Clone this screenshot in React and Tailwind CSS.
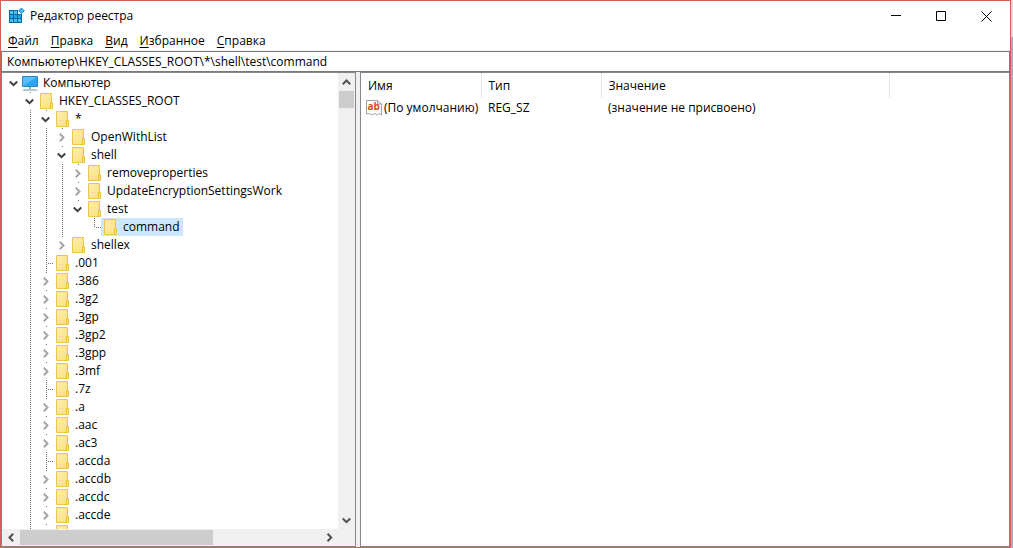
const base = "font-['Open_Sans',sans-serif] text-[12px] leading-[18px]";

function RegIcon() {
  return (
    <svg width="16" height="16" viewBox="0 0 16 16" aria-hidden="true">
      <path d="M0 2h9v4h4v9H0z" fill="#0c6a9e" />
      <path d="M1 3h3v3H1zM5 3h3v3H5z" fill="#45c3f7" />
      <path d="M1 7h3v3H1zM5 7h3v3H5zM9 7h3v3H9z" fill="#23a4e4" />
      <path d="M1 11h3v3H1zM5 11h3v3H5zM9 11h3v3H9z" fill="#3fbdf5" />
      <path d="M12.500 .7L15.300 3.500 12.500 6.300 9.700 3.500z" fill="#45c3f7" stroke="#1580b8" transform="translate(0 -.7)" />
    </svg>
  );
}

function Folder() {
  return (
    <svg width="17" height="18" viewBox="0 0 17 18" className="shrink-0" aria-hidden="true">
      <defs>
        <linearGradient id="folder" x1="0" y1="0" x2="1" y2="1">
          <stop offset="0" stopColor="#ffeeaf" />
          <stop offset="1" stopColor="#fddf7c" />
        </linearGradient>
      </defs>
      <path d="M3.500 1.500h11v15h-11z" fill="url(#folder)" stroke="#ecc64a" />
      <path d="M13.500 10.500h2v6h-2z" fill="#ffe48c" stroke="#e8bf3c" />
    </svg>
  );
}

function Computer() {
  return (
    <svg width="17" height="18" viewBox="0 0 17 18" className="shrink-0" aria-hidden="true">
      <path d="M1.500 2.500h15v10h-15z" fill="#52c0fb" stroke="#2f86ba" />
      <path d="M2 12L16 3v9z" fill="#2aa5f2" />
      <path d="M8 13h2v2H8z" fill="#8fa9b9" />
      <path d="M3 15h12l2 2H1z" fill="#b3c7d4" />
    </svg>
  );
}

function Guide({ kind, root }) {
  const drawing = (
    <svg width="16" height="18" viewBox="0 0 16 18" className="shrink-0" aria-hidden="true">
      {"|TL".includes(kind) && (
        <path d={kind === "L" ? "M9.500 0v10" : "M9.500 0v18"} stroke="#707070" strokeDasharray="1 1" />
      )}
      {"TL".includes(kind) && <path d="M11 9.500h5" stroke="#707070" strokeDasharray="1 1" />}
      {"v>".includes(kind) && !root && <path d="M9.500 0v1" stroke="#707070" />}
      {kind === "v" && <path d="M4.800 7.500L8.500 11.200 12.200 7.500" fill="none" stroke="#404040" strokeWidth="2" />}
      {kind === ">" && <path d="M6.800 5.800L10.500 9.500 6.800 13.200" fill="none" stroke="#a6a6a6" strokeWidth="2" />}
    </svg>
  );
  if (kind === "v" || kind === ">")
    return (
      <button type="button" aria-label={kind === "v" ? "Свернуть" : "Развернуть"} className="shrink-0">
        {drawing}
      </button>
    );
  return drawing;
}

// One character per indent column: "v" open, ">" closed, "|" line, "T" and "L" branch to a leaf.
const rows = [
  ["v", "Компьютер"],
  [" v", "HKEY_CLASSES_ROOT"],
  [" |v", "*"],
  [" ||>", "OpenWithList"],
  [" ||v", "shell"],
  [" |||>", "removeproperties"],
  [" |||>", "UpdateEncryptionSettingsWork"],
  [" |||v", "test"],
  [" ||| L", "command"],
  [" ||>", "shellex"],
  [" |T", ".001"],
  [" |>", ".386"],
  [" |>", ".3g2"],
  [" |>", ".3gp"],
  [" |>", ".3gp2"],
  [" |>", ".3gpp"],
  [" |>", ".3mf"],
  [" |T", ".7z"],
  [" |>", ".a"],
  [" |>", ".aac"],
  [" |>", ".ac3"],
  [" |T", ".accda"],
  [" |>", ".accdb"],
  [" |>", ".accdc"],
  [" |>", ".accde"],
  [" |>", ""],
];

function TreeRow({ guides, label }) {
  const selected = label === "command";
  const root = guides.length === 1;
  return (
    <li className="flex h-[18px] items-center">
      {[...guides].map((g, i) => (
        <Guide key={i} kind={g} root={root} />
      ))}
      <span className={selected ? "flex h-[18px] items-center bg-[#cce8ff] pr-[3px]" : "flex h-[18px] items-center"}>
        {root ? <Computer /> : <Folder />}
        <span className="pl-[5px] whitespace-nowrap">{label}</span>
      </span>
    </li>
  );
}

function Arrow({ d }) {
  return (
    <svg width="9" height="9" viewBox="0 0 9 9" aria-hidden="true">
      <path d={d} fill="none" stroke="#505050" strokeWidth="2" />
    </svg>
  );
}

const menu = ["Файл", "Правка", "Вид", "Избранное", "Справка"];

export default function App() {
  return (
    <div className={`flex h-screen bg-linear-to-b from-[#dcdcd8] from-[37px] to-[#a9adb9] to-[37px] pr-[2px] text-black ${base}`}>
      <main className="flex min-w-0 flex-1 flex-col border border-[#d0604f] bg-white">
        <header className="flex h-[30px] shrink-0 items-center pl-2">
          <RegIcon />
          <h1 className="flex-1 pl-[5px]">Редактор реестра</h1>
          <button type="button" aria-label="Свернуть окно" className="flex h-[30px] w-[45px] items-center justify-center">
            <svg width="10" height="10" viewBox="0 0 10 10"><path d="M0 4.500h10" stroke="#000" /></svg>
          </button>
          <button type="button" aria-label="Развернуть окно" className="flex h-[30px] w-[45px] items-center justify-center">
            <svg width="10" height="10" viewBox="0 0 10 10"><path d="M.5.5h9v9h-9z" fill="none" stroke="#000" /></svg>
          </button>
          <button type="button" aria-label="Закрыть" className="flex h-[30px] w-[47px] items-center justify-center">
            <svg width="11" height="11" viewBox="0 0 11 11"><path d="M.5.5l10 10M10.500.5l-10 10" stroke="#000" /></svg>
          </button>
        </header>
        <nav className="flex h-[20px] shrink-0 items-end gap-3 border-b border-[#f0f0f0] pl-[7px]">
          {menu.map((m) => (
            <button key={m} type="button">
              <span className="underline underline-offset-2">{m[0]}</span>
              {m.slice(1)}
            </button>
          ))}
        </nav>
        <input
          aria-label="Адрес"
          defaultValue="Компьютер\HKEY_CLASSES_ROOT\*\shell\test\command"
          className="h-[21px] shrink-0 border border-[#7a7a7a] px-[5px] outline-none"
        />
        <div className="flex min-h-0 flex-1 bg-[#f0f0f0]">
          <section className="flex w-[355px] shrink-0 flex-col border border-[#828790] bg-white">
            <div className="flex min-h-0 flex-1">
              <ul className="min-w-0 flex-1 overflow-hidden pt-px pl-[3px]">
                {rows.map(([g, l]) => (
                  <TreeRow key={l} guides={g} label={l} />
                ))}
              </ul>
              <div className="flex w-[17px] shrink-0 flex-col items-center bg-[#f0f0f0] pt-px">
                <button type="button" aria-label="Вверх" className="flex h-[17px] items-center"><Arrow d="M.8 6.200L4.500 2.500 8.200 6.200" /></button>
                <div className="h-[17px] w-[15px] bg-[#cdcdcd]" />
                <div className="flex-1" />
                <button type="button" aria-label="Вниз" className="flex h-[17px] items-center"><Arrow d="M.8 2.500L4.500 6.200 8.200 2.500" /></button>
              </div>
            </div>
            <div className="flex h-[17px] shrink-0 items-center bg-[#f0f0f0] pr-[17px]">
              <button type="button" aria-label="Влево" className="flex w-[18px] justify-center"><Arrow d="M6.200 .8L2.500 4.500 6.200 8.200" /></button>
              <div className="h-[15px] w-[193px] bg-[#cdcdcd]" />
              <div className="flex-1" />
              <button type="button" aria-label="Вправо" className="flex w-[17px] justify-center"><Arrow d="M2.500 .8L6.200 4.500 2.500 8.200" /></button>
            </div>
          </section>
          <section className="ml-1 min-w-0 flex-1 border border-[#828790] bg-white">
            <table className="w-full table-fixed border-collapse text-left">
              <thead>
                <tr className="h-[25px]">
                  <th className="w-[120px] border-r border-[#e5e5e5] pl-[7px] font-normal">Имя</th>
                  <th className="w-[120px] border-r border-[#e5e5e5] pl-[7px] font-normal">Тип</th>
                  <th className="w-[288px] border-r border-[#e5e5e5] pl-[7px] font-normal">Значение</th>
                  <th></th>
                </tr>
              </thead>
              <tbody>
                <tr className="h-5">
                  <td className="pl-[5px] whitespace-nowrap">
                    <span className="flex items-center gap-[2px]">
                      <svg width="16" height="16" viewBox="0 0 16 16" className="shrink-0" aria-hidden="true">
                        <path d="M.5.5h11l4 3.500v11l-2-1.500-2 1.500-3-1.500-2 1.500-3-1.500-3 .5z" fill="#fff" stroke="#a0a0a0" />
                        <path d="M11.500.5v3.500h4" fill="none" stroke="#a0a0a0" />
                        <text x="1.500" y="10" fontSize="10" fontWeight="700" fill="#d9481f">ab</text>
                      </svg>
                      (По умолчанию)
                    </span>
                  </td>
                  <td className="pl-[7px]">REG_SZ</td>
                  <td className="pl-[7px]">(значение не присвоено)</td>
                  <td></td>
                </tr>
              </tbody>
            </table>
          </section>
        </div>
      </main>
    </div>
  );
}
